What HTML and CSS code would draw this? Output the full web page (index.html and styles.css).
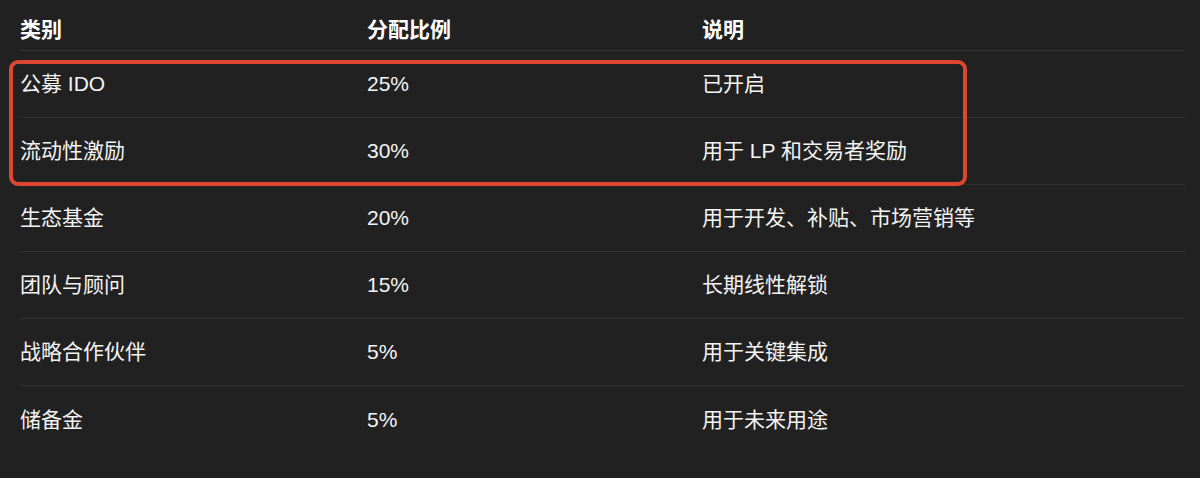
FILE: index.html
```html
<!DOCTYPE html>
<html lang="zh-CN">
<head>
<meta charset="utf-8">
<link rel="stylesheet" href="styles.css">
</head>
<body>
<div class="wrap">
  <div class="table">
    <div class="row head">
      <div class="cell">类别</div>
      <div class="cell">分配比例</div>
      <div class="cell">说明</div>
    </div>
    <div class="row">
      <div class="cell">公募 IDO</div>
      <div class="cell">25%</div>
      <div class="cell">已开启</div>
    </div>
    <div class="row">
      <div class="cell">流动性激励</div>
      <div class="cell">30%</div>
      <div class="cell">用于 LP 和交易者奖励</div>
    </div>
    <div class="row">
      <div class="cell">生态基金</div>
      <div class="cell">20%</div>
      <div class="cell">用于开发、补贴、市场营销等</div>
    </div>
    <div class="row">
      <div class="cell">团队与顾问</div>
      <div class="cell">15%</div>
      <div class="cell">长期线性解锁</div>
    </div>
    <div class="row">
      <div class="cell">战略合作伙伴</div>
      <div class="cell">5%</div>
      <div class="cell">用于关键集成</div>
    </div>
    <div class="row last">
      <div class="cell">储备金</div>
      <div class="cell">5%</div>
      <div class="cell">用于未来用途</div>
    </div>
  </div>
  <div class="highlight"></div>
</div>
</body>
</html>
```

FILE: styles.css
```css
html, body {
  margin: 0;
  padding: 0;
  background: #212121;
}
body {
  width: 1200px;
  height: 478px;
  overflow: hidden;
  font-family: "Liberation Sans", "Noto Sans CJK SC", sans-serif;
  color: #f4f4f4;
}
.wrap {
  position: relative;
  padding: 0 15px 0 20px;
}
.table {
  display: flex;
  flex-direction: column;
}
.row {
  display: grid;
  grid-template-columns: 347px 335px 1fr;
  align-items: center;
  height: 67px;
  box-sizing: border-box;
  border-bottom: 1px solid #303030;
  font-size: 21px;
  line-height: 22px;
}
.row.head {
  height: 51px;
  align-items: start;
  padding-top: 19px;
  font-weight: bold;
  color: #ffffff;
  border-bottom-color: #363636;
}
.row.last {
  border-bottom: none;
}
.highlight {
  position: absolute;
  left: 9px;
  top: 60px;
  width: 958px;
  height: 126px;
  box-sizing: border-box;
  border: 4px solid #dd4630;
  border-radius: 9px;
  pointer-events: none;
}
```
